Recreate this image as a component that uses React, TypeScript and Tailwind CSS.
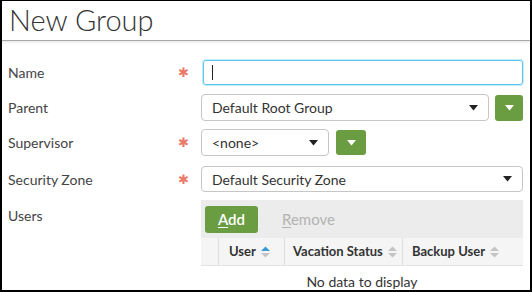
const font = { fontFamily: "Lato, 'Open Sans', sans-serif" };

function Caret({ className }: { className?: string }) {
  return (
    <svg width="9" height="6" viewBox="0 0 9 6" className={className} aria-hidden="true">
      <path d="M0 0h9L4.5 5.5z" fill="currentColor" />
    </svg>
  );
}

function SortIcon({ active = false }: { active?: boolean }) {
  return (
    <svg width="9" height="12" viewBox="0 0 9 12" className="ml-[5px] shrink-0" aria-hidden="true">
      <path d="M0 5L4.5 0.5L9 5z" fill={active ? "#3d9ad6" : "#c4c4c4"} />
      <path d="M0 7h9L4.5 11.5z" fill="#c4c4c4" />
    </svg>
  );
}

function Required({ on }: { on?: boolean }) {
  return (
    <div className="flex w-[30px] shrink-0 justify-center pr-[6px]">
      {on ? <span className="text-[13px] leading-none text-[#ea7a6a]">✱</span> : null}
    </div>
  );
}

function SelectBox({ value, className }: { value: string; className: string }) {
  return (
    <div
      className={`flex items-center justify-between rounded-[4px] border border-[#c6c6c6] bg-white pl-[10px] pr-[10px] text-[14px] text-[#333] ${className}`}
    >
      <span>{value}</span>
      <Caret className="text-[#222]" />
    </div>
  );
}

function GreenCaret({ className }: { className: string }) {
  return (
    <button className={`flex items-center justify-center rounded-[3px] bg-[#6a9c42] ${className}`}>
      <Caret className="text-white" />
    </button>
  );
}

export default function App() {
  return (
    <div style={font} className="h-[292px] w-[532px] overflow-hidden border-2 border-t border-black bg-white">
      <div className="relative h-[40px] border-b border-[#a8a8a8] pl-[7px] shadow-[0_1px_3px_rgba(0,0,0,0.12)]">
        <h1 className="pt-[2px] text-[29px] font-light leading-[34px] text-[#333]">New Group</h1>
      </div>

      <div className="pr-[5px] pl-[6px] text-[14px] text-[#444]">
        <div className="mt-[19px] flex h-[25px] items-center">
          <label className="w-[163px] shrink-0">Name</label>
          <Required on />
          <div className="ml-[2px] flex h-[25px] w-[320px] items-center rounded-[3px] border border-[#5bc5ec] px-[8px] shadow-[0_0_0_1px_rgba(91,197,236,0.35)]">
            <span className="h-[15px] w-px bg-[#222]" />
          </div>
        </div>

        <div className="mt-[9px] flex h-[27px] items-center">
          <label className="w-[163px] shrink-0">Parent</label>
          <Required />
          <SelectBox value="Default Root Group" className="h-[27px] w-[288px]" />
          <GreenCaret className="ml-[6px] h-[26px] w-[28px]" />
        </div>

        <div className="mt-[8px] flex h-[27px] items-center">
          <label className="w-[163px] shrink-0">Supervisor</label>
          <Required on />
          <SelectBox value="<none>" className="h-[27px] w-[128px]" />
          <GreenCaret className="ml-[7px] h-[25px] w-[30px]" />
        </div>

        <div className="mt-[10px] flex h-[26px] items-center">
          <label className="w-[163px] shrink-0">Security Zone</label>
          <Required on />
          <SelectBox value="Default Security Zone" className="h-[26px] w-[322px]" />
        </div>

        <div className="mt-[8px] flex">
          <label className="w-[163px] shrink-0 pt-[5px]">Users</label>
          <Required />
          <div className="w-[322px]">
            <div className="flex h-[38px] items-center gap-[24px] bg-[#ececec] pl-[4px]">
              <button className="h-[27px] w-[53px] rounded-[3px] bg-[#6a9c42] text-[15px] font-semibold text-white">
                <span className="underline underline-offset-2">A</span>dd
              </button>
              <span className="text-[15px] text-[#b3b3b3]">
                <span className="underline underline-offset-2">R</span>emove
              </span>
            </div>
            <div className="flex h-[28px] items-center whitespace-nowrap border-b border-[#e2e2e2] bg-[#f5f5f5] text-[13px] font-bold text-[#333]">
              <div className="h-full w-[17px] shrink-0" />
              <div className="flex h-full w-[66px] shrink-0 items-center border-l border-[#dedede] pl-[10px]">
                User
                <SortIcon active />
              </div>
              <div className="flex h-full w-[118px] shrink-0 items-center border-l border-[#dedede] pl-[8px]">
                Vacation Status
                <SortIcon />
              </div>
              <div className="flex h-full flex-1 items-center border-l border-[#dedede] pl-[9px]">
                Backup User
                <SortIcon />
              </div>
            </div>
            <div className="pt-[5px] text-center text-[14px] text-[#333]">No data to display</div>
          </div>
        </div>
      </div>
    </div>
  );
}
